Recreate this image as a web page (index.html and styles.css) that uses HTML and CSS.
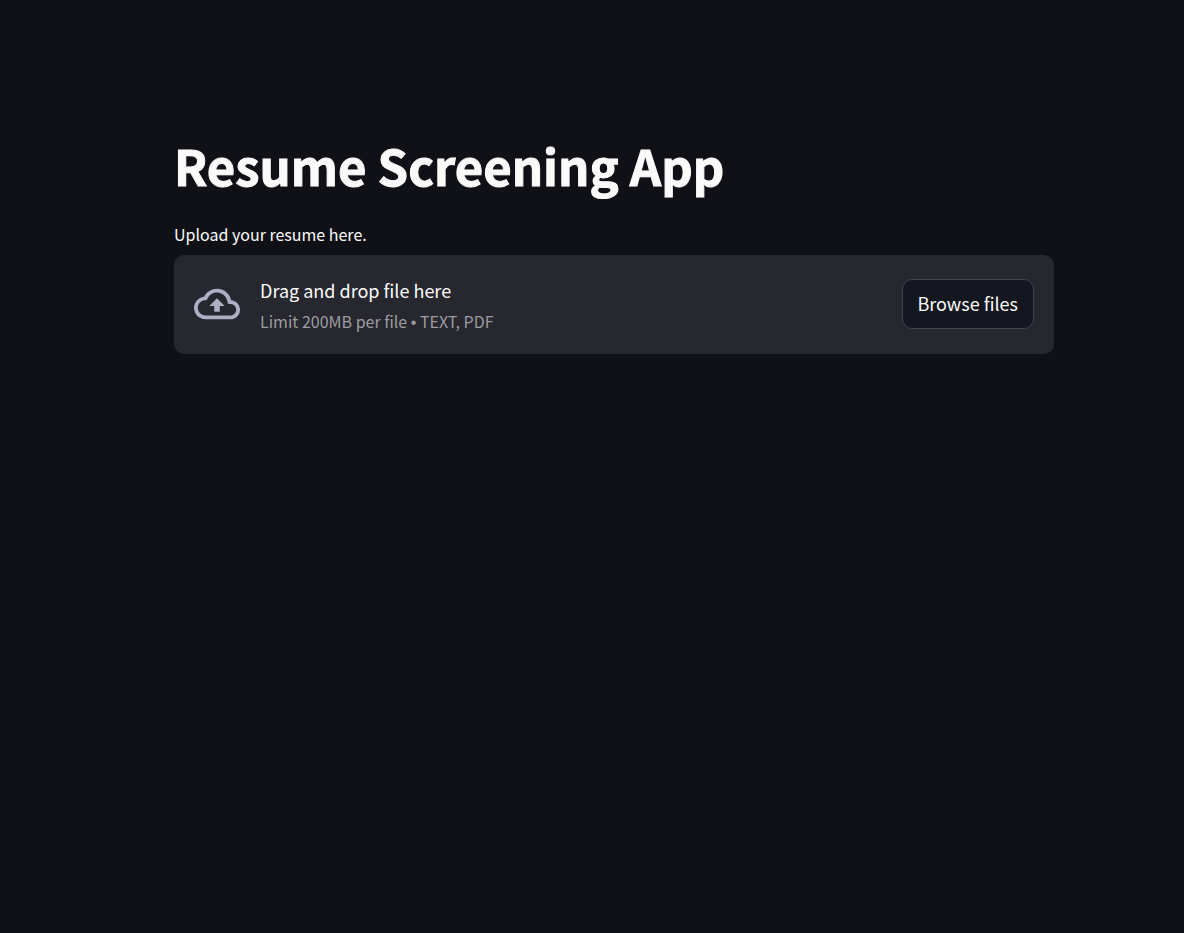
FILE: index.html
```html
<!DOCTYPE html>
<html lang="en">
<head>
<meta charset="utf-8">
<meta name="viewport" content="width=device-width, initial-scale=1">
<title>Resume Screening App</title>
<link rel="stylesheet" href="styles.css">
</head>
<body>
<main class="page">
  <h1 class="title">Resume Screening App</h1>
  <p class="label" id="upload-label">Upload your resume here.</p>
  <section class="dropzone" aria-labelledby="upload-label">
    <svg class="cloud" viewBox="0 0 24 24" aria-hidden="true"><path fill="currentColor" d="M19.35 10.04A7.49 7.49 0 0012 4C9.11 4 6.6 5.64 5.35 8.04A5.994 5.994 0 000 14c0 3.31 2.69 6 6 6h13c2.76 0 5-2.24 5-5 0-2.64-2.05-4.78-4.65-4.96zM19 18H6c-2.21 0-4-1.79-4-4 0-2.05 1.53-3.76 3.56-3.97l1.07-.11.5-.95A5.469 5.469 0 0112 6c2.62 0 4.88 1.86 5.39 4.43l.3 1.5 1.53.11A2.98 2.98 0 0122 15c0 1.65-1.35 3-3 3zM8 13h2.55v3h2.9v-3H16l-4-4z"/></svg>
    <div class="text">
      <span class="prompt">Drag and drop file here</span>
      <span class="hint">Limit 200MB per file <span class="bullet">•</span> TEXT, PDF</span>
    </div>
    <button class="browse" type="button">Browse files</button>
  </section>
</main>
</body>
</html>
```
FILE: styles.css
```css
* {
  box-sizing: border-box;
}

body {
  margin: 0;
  background: #101116;
  color: #fafafa;
  font-family: "Noto Sans CJK SC", "Open Sans", sans-serif;
}

.page {
  padding: 117px 130px 40px 174px;
}

.title {
  margin: 0;
  padding: 16px 0;
  font-size: 49px;
  font-weight: 700;
  line-height: 64px;
  -webkit-text-stroke: 1px currentColor;
}

.label {
  margin: 9px 0;
  font-size: 16px;
  line-height: 24px;
}

.dropzone {
  display: flex;
  align-items: center;
  gap: 20px;
  padding: 19px 20px 20px;
  border-radius: 10px;
  background: #27272f;
}

.cloud {
  flex: none;
  width: 46px;
  height: 46px;
  color: #adafc2;
}

.text {
  display: flex;
  flex: 1;
  flex-direction: column;
  gap: 2px;
}

.prompt {
  font-size: 18px;
  line-height: 32px;
}

.hint {
  color: #9c9ca1;
  font-size: 16px;
  line-height: 26px;
}

.bullet {
  font-family: "Liberation Sans", sans-serif;
  line-height: 1;
}

.browse {
  padding: 7px 15px 9px 14px;
  border: 1px solid #42434b;
  border-radius: 10px;
  background: #14171f;
  color: inherit;
  font-family: inherit;
  font-size: 18px;
  line-height: 32px;
  white-space: nowrap;
}
```
